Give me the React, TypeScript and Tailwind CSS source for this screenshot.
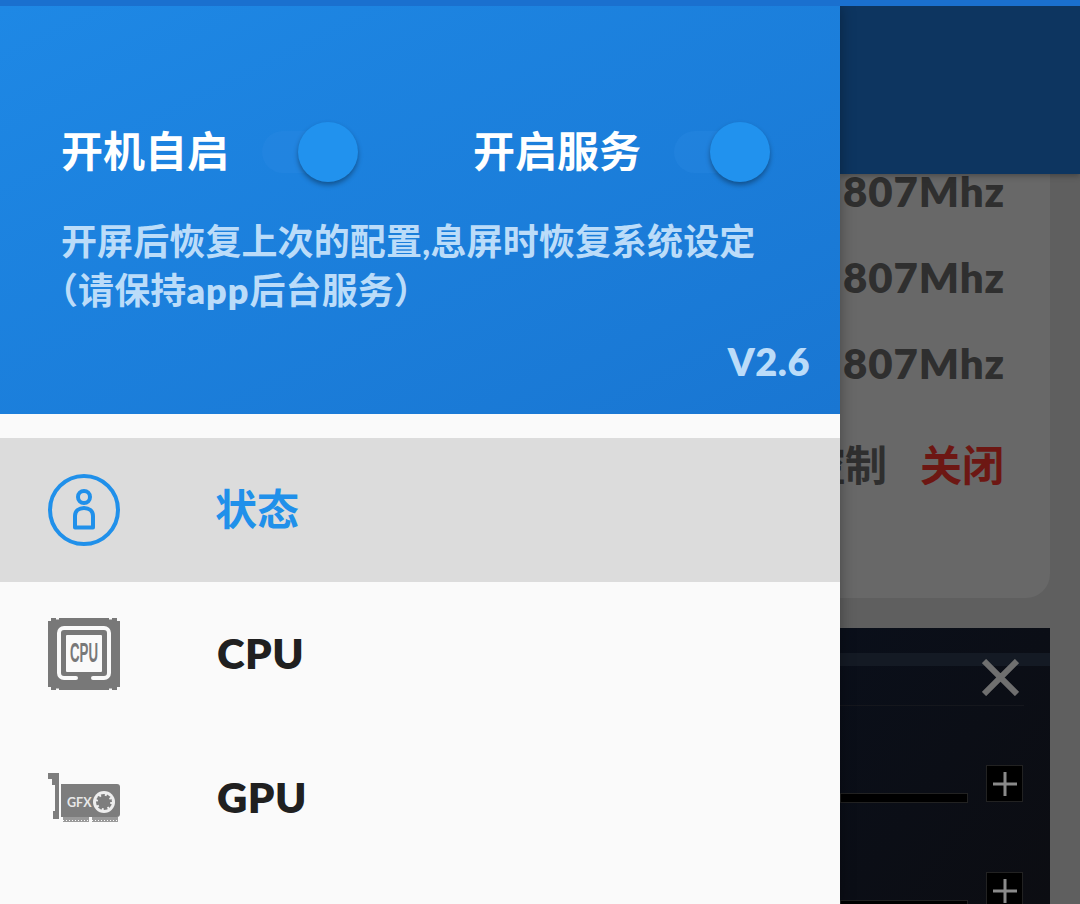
const cjk = "font-['Lato','Noto_Sans_CJK_SC',sans-serif]"

function StatusIcon() {
  return (
    <svg width="72" height="72" viewBox="0 0 72 72" fill="none" stroke="#2090ea" strokeWidth="4">
      <circle cx="36" cy="36" r="34" />
      <circle cx="36" cy="23" r="6" />
      <path d="M27 53.5V42c0-5 4-8 9-8s9 3 9 8v11.5z" strokeLinejoin="round" />
    </svg>
  )
}

function CpuIcon() {
  return (
    <svg width="72" height="72" viewBox="0 0 72 72">
      <path d="M3 0H8V1.500H11V0H61V1.500H64V0H69V3H72V69H69V72H64V70.500H61V72H11V70.500H8V72H3V69H0V3H3z" fill="#787878" />
      <path d="M28 60H16a5 5 0 0 1-5-5V15a5 5 0 0 1 5-5h40a5 5 0 0 1 5 5v40a5 5 0 0 1-5 5H45" fill="none" stroke="#fafafa" strokeWidth="4" strokeLinecap="round" />
      <rect x="18" y="17" width="36" height="37" rx="1" fill="#fafafa" />
      <text x="22" y="44" fontFamily="'Liberation Sans',sans-serif" fontWeight="700" fontSize="27" textLength="28" lengthAdjust="spacingAndGlyphs" fill="#787878">CPU</text>
    </svg>
  )
}

function GpuIcon() {
  return (
    <svg width="72" height="50" viewBox="0 0 72 50">
      <path d="M0 0H11V46H5V38H7V12H4V6H0z" fill="#7d7d7d" />
      <path d="M13 11H69a3 3 0 0 1 3 3V41a3 3 0 0 1-3 3H13z" fill="#7d7d7d" />
      <path d="M15 44H41V49H15zM44 44H70V49H44z" fill="#9a9a9a" />
      <path d="M15 47.500H41M44 47.500H70" stroke="#fafafa" strokeWidth="1" strokeDasharray="1 2" />
      <text x="19" y="33.500" fontFamily="'Lato',sans-serif" fontSize="12.500" fontWeight="700" fill="#e8e8e8">GFX</text>
      <circle cx="56" cy="29" r="11" fill="#eeeeee" />
      <circle cx="56" cy="29" r="8" fill="#7d7d7d" />
      <circle cx="56" cy="29" r="7.500" fill="none" stroke="#eeeeee" strokeWidth="2.500" strokeDasharray="2 4" />
    </svg>
  )
}

function Toggle() {
  return (
    <div className="relative mt-[2px] h-[42px] w-[96px] shrink-0">
      <div className="h-[42px] w-[78px] rounded-full bg-[#2f8ce6]/30" />
      <div className="absolute right-0 top-[-9px] size-[60px] rounded-full bg-[#2192ee] shadow-[0_3px_5px_rgba(0,0,0,0.35)]" />
    </div>
  )
}

function MenuRow({ icon, label, active }: { icon: React.ReactNode; label: string; active?: boolean }) {
  return (
    <div className={`flex h-[144px] items-center pl-[48px] ${active ? 'bg-[#dcdcdc]' : ''}`}>
      <div className="flex w-[169px] items-center">{icon}</div>
      {active ? (
        <span className="-ml-[2px] pb-[2px] text-[42px] font-bold text-[#2090ea]">{label}</span>
      ) : (
        <span className="pb-[2px] text-[42px] font-extrabold tracking-[0.5px] text-[#202020]">{label}</span>
      )}
    </div>
  )
}

function SliderRow() {
  return (
    <div className="flex h-[38px] shrink-0 items-start gap-[18px] pr-[27px]">
      <div className="mt-[28px] h-[10px] flex-1 border border-[#222] bg-black" />
      <div className="flex size-[37px] items-center justify-center border border-[#222] bg-black">
        <svg width="26" height="26" viewBox="0 0 26 26" stroke="#8a8a8a" strokeWidth="3">
          <path d="M13 1V25M1 13H25" />
        </svg>
      </div>
    </div>
  )
}

export default function App() {
  return (
    <div className={`flex h-[904px] w-[1080px] flex-col overflow-hidden ${cjk}`}>
      <div className="relative z-20 h-[6px] shrink-0 bg-[#1a70cf]" />
      <div className="flex min-h-0 flex-1">
        <aside className="z-10 flex w-[840px] shrink-0 flex-col bg-[#fafafa] shadow-[0_0_14px_rgba(0,0,0,0.35)]">
          <div className="flex h-[408px] flex-col bg-gradient-to-br from-[#1e88e5] to-[#1976d2] px-[30px]">
            <div className="mt-[115px] flex items-center pl-[31px]">
              <span className="w-[201px] text-[42px] leading-[60px] font-bold text-white">开机自启</span>
              <Toggle />
              <span className="ml-[115px] w-[201px] text-[42px] leading-[60px] font-bold text-white">开启服务</span>
              <Toggle />
            </div>
            <p className="mt-[36px] pl-[31px] text-[36px] leading-[49px] font-bold tracking-[0.1px] text-[#bbdcf9]">
              开屏后恢复上次的配置,息屏时恢复系统设定
              <br />
              <span className="-ml-[19px]">（请保持<span className="font-extrabold tracking-[1px]">app</span>后台服务）</span>
            </p>
            <div className="mt-[24px] text-right text-[38px] leading-[44px] font-extrabold tracking-[0.5px] text-[#bbdcf9]">V2.6</div>
          </div>
          <div className="pt-[24px]">
            <MenuRow active icon={<StatusIcon />} label="状态" />
            <MenuRow icon={<CpuIcon />} label="CPU" />
            <MenuRow icon={<GpuIcon />} label="GPU" />
          </div>
        </aside>
        <main className="flex min-w-0 flex-1 flex-col overflow-hidden bg-[#5f5f5f]">
          <div className="z-[5] h-[168px] shrink-0 bg-[#0d3560] shadow-[0_2px_6px_rgba(0,0,0,0.3)]" />
          <div className="mr-[30px] h-[424px] shrink-0 rounded-br-[24px] bg-[#686868] pl-[3px] text-[42px] font-extrabold tracking-[0.9px] text-[#2f2f2f]">
            <div className="-mt-[26px] flex h-[86px] items-center">807Mhz</div>
            <div className="flex h-[86px] items-center">807Mhz</div>
            <div className="flex h-[86px] items-center">807Mhz</div>
            <div className="mt-[31px] flex h-[56px] items-center justify-end gap-[33px] pr-[46px] font-bold tracking-normal">
              <span className="shrink-0 whitespace-nowrap">控制</span>
              <span className="shrink-0 whitespace-nowrap text-[#6d1713]">关闭</span>
            </div>
          </div>
          <div className="relative mt-[30px] mr-[30px] flex min-h-0 flex-1 flex-col overflow-hidden bg-gradient-to-br from-[#0a0f1a] to-[#0c0d12]">
            <div className="mt-[25px] h-[13px] shrink-0 bg-[#141a24]" />
            <div className="mt-[39px] mr-[26px] h-px shrink-0 bg-[#15171d]" />
            <svg className="absolute top-[31px] right-[31px]" width="37" height="37" viewBox="0 0 37 37" stroke="#6f6f6f" strokeWidth="6">
              <path d="M2 2L35 35M35 2L2 35" />
            </svg>
            <div className="mt-[59px] flex shrink-0 flex-col gap-[69px]">
              <SliderRow />
              <SliderRow />
            </div>
          </div>
        </main>
      </div>
    </div>
  )
}
